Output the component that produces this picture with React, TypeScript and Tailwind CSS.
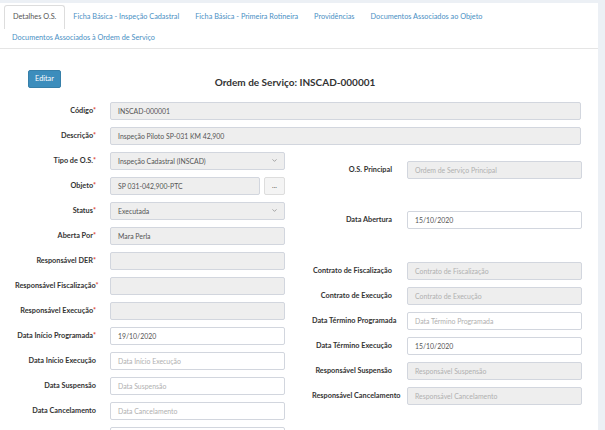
import { ChevronDown } from "lucide-react";

const font = { fontFamily: "Lato, 'Liberation Sans', sans-serif" };

const tabs = [
  "Detalhes O.S.",
  "Ficha Básica - Inspeção Cadastral",
  "Ficha Básica - Primeira Rotineira",
  "Providências",
  "Documentos Associados ao Objeto",
  "Documentos Associados à Ordem de Serviço",
];

function Label({ text, req, w }: { text: string; req?: boolean; w: string }) {
  return (
    <div className={`${w} shrink-0 text-right whitespace-nowrap text-[7.3px] font-bold text-[#333] pt-[1px]`}>
      {text}
      {req && <span className="text-[#dd4b39]">*</span>}
    </div>
  );
}

function Field({
  value,
  placeholder,
  disabled,
  select,
  className = "",
}: {
  value?: string;
  placeholder?: string;
  disabled?: boolean;
  select?: boolean;
  className?: string;
}) {
  return (
    <div
      className={`h-[18px] flex items-center justify-between px-[7px] border border-[#d2d6de] rounded-[2px] text-[6.9px] ${
        disabled ? "bg-[#eeeeee]" : "bg-white"
      } ${className}`}
    >
      <span className={`pt-[1px] ${value ? "text-[#555]" : "text-[#b0b0b0]"}`}>{value || placeholder}</span>
      {select && <ChevronDown size={7} strokeWidth={2.5} className="text-[#888] -mr-[1px]" />}
    </div>
  );
}

function LeftRow({ label, req, children }: { label: string; req?: boolean; children: React.ReactNode }) {
  return (
    <div className="flex items-center h-[25px]">
      <Label text={label} req={req} w="w-[81px]" />
      <div className="ml-[14px] flex-1 flex">{children}</div>
    </div>
  );
}

function RightRow({ label, children, className = "" }: { label: string; children: React.ReactNode; className?: string }) {
  return (
    <div className={`flex items-center h-[25px] ${className}`}>
      <Label text={label} w="w-[80px]" />
      <div className="ml-[15px] flex-1 flex">{children}</div>
    </div>
  );
}

export default function App() {
  return (
    <div className="w-[605px] h-[430px] overflow-hidden bg-[#ecf0f5] pt-[3px]" style={font}>
      <div className="w-[598px] h-[427px] bg-white">
        {/* Tabs */}
        <ul className="flex flex-wrap items-start pt-[2px] px-[4px] border-b border-[#e5e5e5] h-[46px]">
          {tabs.map((t, i) => (
            <li
              key={t}
              className={`px-[8px] flex items-center text-[7.3px] whitespace-nowrap ${
                i === 0
                  ? "h-[24px] border border-b-0 border-[#ddd] rounded-t-[3px] text-[#555]"
                  : i === 5
                  ? "h-[19px] text-[#4a90c4]"
                  : "h-[24px] text-[#4a90c4]"
              }`}
            >
              {t}
            </li>
          ))}
        </ul>

        <div className="px-[15px]">
          {/* Title row */}
          <div className="grid grid-cols-[1fr_auto_1fr] items-center mt-[21px] h-[18px] mb-[10px] leading-none">
            <div className="h-[18px]">
              <button className="block ml-[13px] w-[33px] h-[18px] bg-[#3c8dbc] border border-[#367fa9] rounded-[2px] text-white text-[7.3px] leading-none">
                Editar
              </button>
            </div>
            <h1 className="text-[10px] font-bold text-[#333] -ml-[8px] leading-none pt-[5px]">
              Ordem de Serviço: INSCAD-000001
            </h1>
            <div />
          </div>

          <LeftRow label="Código" req>
            <Field value="INSCAD-000001" disabled className="w-[471px]" />
          </LeftRow>
          <LeftRow label="Descrição" req>
            <Field value="Inspeção Piloto SP-031 KM 42,900" disabled className="w-[471px]" />
          </LeftRow>

          <div className="flex">
            {/* left column */}
            <div className="w-[270px]">
              <LeftRow label="Tipo de O.S." req>
                <Field value="Inspeção Cadastral (INSCAD)" disabled select className="w-full" />
              </LeftRow>
              <LeftRow label="Objeto" req>
                <Field value="SP 031-042,900-PTC" disabled className="w-[150px]" />
                <div className="ml-[4px] w-[21px] h-[18px] bg-[#f4f4f4] border border-[#ddd] rounded-[2px] text-[7px] text-[#555] flex items-center justify-center">
                  ...
                </div>
              </LeftRow>
              <LeftRow label="Status" req>
                <Field value="Executada" disabled select className="w-full" />
              </LeftRow>
              <LeftRow label="Aberta Por" req>
                <Field value="Mara Perla" disabled className="w-full" />
              </LeftRow>
              <LeftRow label="Responsável DER" req>
                <Field disabled className="w-full" />
              </LeftRow>
              <LeftRow label="Responsável Fiscalização" req>
                <Field disabled className="w-full" />
              </LeftRow>
              <LeftRow label="Responsável Execução" req>
                <Field disabled className="w-full" />
              </LeftRow>
              <LeftRow label="Data Início Programada" req>
                <Field value="19/10/2020" className="w-full" />
              </LeftRow>
              <LeftRow label="Data Início Execução">
                <Field placeholder="Data Início Execução" className="w-full" />
              </LeftRow>
              <LeftRow label="Data Suspensão">
                <Field placeholder="Data Suspensão" className="w-full" />
              </LeftRow>
              <LeftRow label="Data Cancelamento">
                <Field placeholder="Data Cancelamento" className="w-full" />
              </LeftRow>
              <LeftRow label="">
                <Field className="w-full" />
              </LeftRow>
            </div>

            {/* right column */}
            <div className="ml-[27px] w-[270px] pt-[9px]">
              <RightRow label="O.S. Principal">
                <Field placeholder="Ordem de Serviço Principal" disabled className="w-full" />
              </RightRow>
              <RightRow label="Data Abertura" className="mt-[25px]">
                <Field value="15/10/2020" className="w-full" />
              </RightRow>
              <RightRow label="Contrato de Fiscalização" className="mt-[26px]">
                <Field placeholder="Contrato de Fiscalização" disabled className="w-full" />
              </RightRow>
              <RightRow label="Contrato de Execução">
                <Field placeholder="Contrato de Execução" disabled className="w-full" />
              </RightRow>
              <RightRow label="Data Término Programada">
                <Field placeholder="Data Término Programada" className="w-full" />
              </RightRow>
              <RightRow label="Data Término Execução">
                <Field value="15/10/2020" className="w-full" />
              </RightRow>
              <RightRow label="Responsável Suspensão">
                <Field placeholder="Responsável Suspensão" disabled className="w-full" />
              </RightRow>
              <RightRow label="Responsável Cancelamento">
                <Field placeholder="Responsável Cancelamento" disabled className="w-full" />
              </RightRow>
            </div>
          </div>
        </div>
      </div>
    </div>
  );
}
